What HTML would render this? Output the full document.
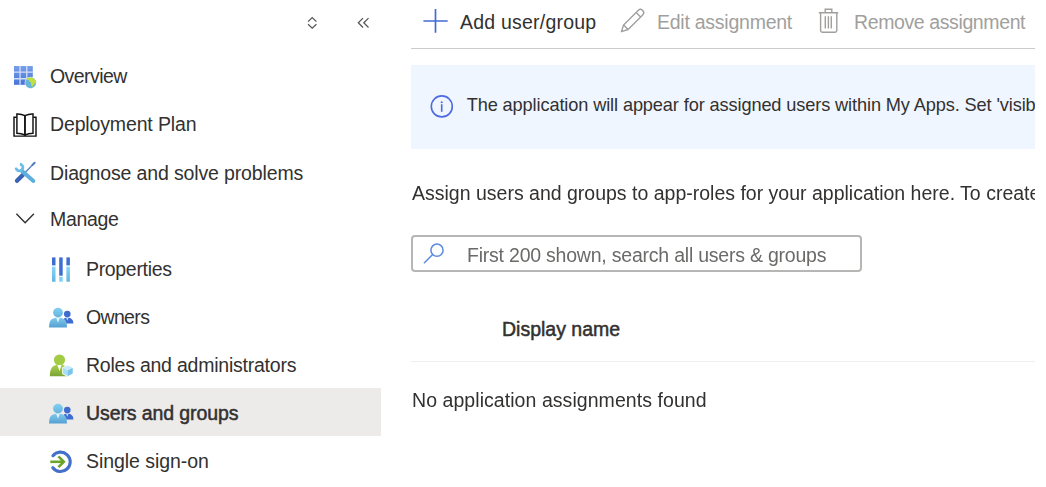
<!DOCTYPE html>
<html><head><meta charset="utf-8">
<style>
html,body{margin:0;padding:0;background:#fff;}
body{width:1046px;height:487px;overflow:hidden;position:relative;font-family:"Liberation Sans",sans-serif;color:#323130;}
.t{position:absolute;white-space:nowrap;line-height:24px;}
.ab{position:absolute;}
#ic{position:absolute;left:0;top:0;}
</style></head><body>
<div class="ab" style="left:0;top:388px;width:381px;height:48px;background:#edebe9;"></div>
<div class="ab" style="left:411px;top:48px;width:624px;height:1px;background:#cbcbcb"></div>
<div class="ab" style="left:411px;top:65px;width:624px;height:84px;background:#f0f6ff;"></div>
<div class="ab" style="left:411px;top:235px;width:447px;height:33px;border:2px solid #b8b6b4;border-radius:4px"></div>
<div class="ab" style="left:411px;top:361px;width:624px;height:1px;background:#f1f0ef"></div>
<div class="ab" style="left:411px;top:60px;width:624px;height:160px;overflow:hidden">
 <div class="t" id="bt" style="left:55.7px;top:32.59px;font-size:18.2px;letter-spacing:-0.12px">The application will appear for assigned users within My Apps. Set 'visible to users?' to no in properties to prevent this.</div>
 <div class="t" id="as" style="will-change:transform;left:0.7px;top:121.24px;font-size:19.5px;letter-spacing:0px">Assign users and groups to app-roles for your application here. To create new app-roles for this application, use the application registration.</div>
</div>
<div class="t" style="left:50px;top:64.24px;font-size:19.5px;letter-spacing:-0.55px;color:#323130">Overview</div>
<div class="t" style="left:50px;top:112.24px;font-size:19.5px;letter-spacing:-0.14px;color:#323130">Deployment Plan</div>
<div class="t" style="left:50px;top:161.24px;font-size:19.5px;letter-spacing:-0.14px;color:#323130">Diagnose and solve problems</div>
<div class="t" style="left:50px;top:206.94px;font-size:19.5px;letter-spacing:-0.3px;color:#323130">Manage</div>
<div class="t" style="left:86px;top:257.24px;font-size:19.5px;letter-spacing:-0.33px;color:#323130">Properties</div>
<div class="t" style="left:86px;top:304.84px;font-size:19.5px;letter-spacing:-0.66px;color:#323130">Owners</div>
<div class="t" style="left:86px;top:353.04px;font-size:19.5px;letter-spacing:-0.23px;color:#323130">Roles and administrators</div>
<div class="t" style="left:86px;top:400.94px;font-size:19.5px;letter-spacing:-0.1px;-webkit-text-stroke:0.5px currentColor;color:#323130">Users and groups</div>
<div class="t" style="left:86px;top:449.24px;font-size:19.5px;letter-spacing:-0.06px;color:#323130">Single sign-on</div>
<div class="t" style="left:460px;top:9.94px;font-size:19.5px;letter-spacing:0.22px;color:#323130">Add user/group</div>
<div class="t" style="left:657px;top:9.94px;font-size:19.5px;letter-spacing:-0.25px;color:#a19f9d">Edit assignment</div>
<div class="t" style="left:854px;top:9.94px;font-size:19.5px;letter-spacing:-0.39px;color:#a19f9d">Remove assignment</div>
<div class="t" style="will-change:transform;left:467px;top:243.04px;font-size:19.5px;letter-spacing:-0.22px;color:#6b6a69">First 200 shown, search all users &amp; groups</div>
<div class="t" style="left:502px;top:317.34px;font-size:19.5px;letter-spacing:0px;-webkit-text-stroke:0.5px currentColor;color:#323130">Display name</div>
<div class="t" style="will-change:transform;left:412px;top:388.04px;font-size:19.5px;letter-spacing:0.06px;color:#323130">No application assignments found</div>
<svg id="ic" width="1046" height="487" viewBox="0 0 1046 487">
 <defs>
  <linearGradient id="gGrid" gradientUnits="userSpaceOnUse" x1="0" y1="66" x2="0" y2="85"><stop offset="0" stop-color="#77a0ea"/><stop offset="1" stop-color="#4673d6"/></linearGradient>
  <linearGradient id="gLight" x1="0" y1="0" x2="0" y2="1"><stop offset="0" stop-color="#86d6f7"/><stop offset="1" stop-color="#62b4e0"/></linearGradient>
  <linearGradient id="gPerson" x1="0" y1="0" x2="0" y2="1"><stop offset="0" stop-color="#7fcaee"/><stop offset="1" stop-color="#56a0d2"/></linearGradient>
  <linearGradient id="gHead" x1="0" y1="0" x2="0" y2="1"><stop offset="0" stop-color="#82d0f2"/><stop offset="1" stop-color="#66b2de"/></linearGradient>
  <linearGradient id="gGreen" x1="0" y1="0" x2="0" y2="1"><stop offset="0" stop-color="#a9d24a"/><stop offset="1" stop-color="#7aa436"/></linearGradient>
 </defs>
 <!-- top chevrons -->
 <path d="M308.1 21.6 L312.2 17.6 L316.4 21.6 M308.1 24.3 L312.2 28.1 L316.4 24.3" fill="none" stroke="#555" stroke-width="1.25"/>
 <path d="M363 18.1 L358.3 22.8 L363 27.5 M368.5 18.1 L363.8 22.8 L368.5 27.5" fill="none" stroke="#555" stroke-width="1.25"/>
 <!-- overview grid -->
 <rect x="14" y="66" width="18.8" height="18.8" fill="url(#gGrid)"/>
 <path d="M20.05 66 V84.8 M26.75 66 V84.8 M14 72.05 H32.8 M14 78.75 H32.8" stroke="#d3def5" stroke-width="1.3"/>
 <circle cx="30.6" cy="82.8" r="6" fill="#e9f0fb"/>
 <circle cx="30.6" cy="82.8" r="5.4" fill="#66b4da"/>
 <path d="M26.4 78.6 Q28.8 77.3 31.5 77.5 Q34.2 78.2 35.6 80.6 L35.9 82.8 L34.6 83.8 L33.2 85.4 L32.2 87.2 L31.2 85.2 L30.8 82.6 L29.4 81.2 L28.8 79.9 L27.2 79.8 Z" fill="#bfe03e"/>
 <!-- book -->
 <g fill="none" stroke="#111" stroke-width="1.45" stroke-linejoin="miter">
  <path d="M16.6 117.3 H14 V136.1 H36 V117.3 H33.3"/>
  <path d="M16.9 114 Q21.3 113.8 24.95 115.6 V135 Q21.3 133.3 16.9 133.2 Z"/>
  <path d="M33 114 Q28.6 113.8 24.95 115.6 V135 Q28.6 133.3 33 133.2 Z"/>
 </g>
 <!-- wrench -->
 <line x1="17" y1="180.8" x2="22.8" y2="175" stroke="#3b64b6" stroke-width="4.4" stroke-linecap="round"/>
 <line x1="22.5" y1="175.3" x2="33.8" y2="163.6" stroke="#4a7cc4" stroke-width="1.35"/>
 <line x1="32.3" y1="165.1" x2="34.6" y2="162.8" stroke="#4a7cc4" stroke-width="2" stroke-linecap="round"/>
 <line x1="21.5" y1="170.5" x2="33.4" y2="181" stroke="#5eaede" stroke-width="3.9" stroke-linecap="round"/>
 <path d="M19.9 164.1 A3.45 3.45 0 1 1 16 167.6" fill="none" stroke="#6cbde8" stroke-width="2.7"/>
 <!-- manage chevron -->
 <path d="M16.4 213.7 L25.15 222.7 L33.9 213.7" fill="none" stroke="#323130" stroke-width="1.4"/>
 <!-- properties -->
 <g>
  <rect x="52" y="257.4" width="3.5" height="8" fill="#3f6ed2"/><rect x="52" y="266.7" width="3.5" height="15" fill="url(#gLight)"/>
  <rect x="59.2" y="257.4" width="3.5" height="18.3" fill="#3f6ed2"/><rect x="59.2" y="276.8" width="3.5" height="4.9" fill="#7fd0f5"/>
  <rect x="66.4" y="257.4" width="3.5" height="8" fill="#3f6ed2"/><rect x="66.4" y="266.7" width="3.5" height="15" fill="url(#gLight)"/>
 </g>
 <!-- owners / users -->
 <g id="ppl">
  <circle cx="67.3" cy="314" r="3.3" fill="#3e6bd0"/>
  <path d="M63 323.6 V320.6 Q63.6 317.6 67.3 317.6 Q70.8 317.6 72.6 320 Q73.4 321.5 73.4 323.6 Z" fill="#3f6cd0"/>
  <path d="M66.2 317.8 L67.3 320.8 L68.4 317.8 Z" fill="#cfe6fa"/>
  <circle cx="58" cy="312.6" r="4.9" fill="url(#gHead)"/>
  <path d="M49 327.4 Q49 321 52 319 Q54.5 317.5 58 317.5 Q61.5 317.5 64 319 Q67 321 67 327.4 Z" fill="url(#gPerson)"/>
  <path d="M56.2 317.7 L58 322.8 L59.8 317.7 Z" fill="#e4f5fd"/>
 </g>
 <use href="#ppl" y="96"/>
 <!-- roles -->
 <circle cx="59.5" cy="360" r="5.6" fill="#a3cc45"/>
 <path d="M49.9 376.3 Q49.7 368.5 53.5 366 Q56.3 364.6 59.5 364.6 Q62.8 364.6 65.5 366 Q69 368 69.2 376.3 Z" fill="url(#gGreen)"/>
 <path d="M57.4 365 L59.5 371 L61.6 365 Z" fill="#fff"/>
 <path d="M67.8 364.6 L73.4 367.6 V374 L67.8 377 L62.2 374 V367.6 Z" fill="#fff"/>
 <path d="M67.8 365.6 L72.6 368.1 V373.6 L67.8 376.1 L63 373.6 V368.1 Z" fill="#a6ddf8"/>
 <path d="M67.8 365.6 L72.6 368.1 L67.8 370.6 L63 368.1 Z" fill="#c8ecfc"/>
 <path d="M72.6 368.1 V373.6 L67.8 376.1 V370.6 Z" fill="#7cc3ea"/>
 <!-- sso -->
 <path d="M52.96 455.7 A9.7 9.7 0 1 1 52.8 467.7" fill="none" stroke="#4470cc" stroke-width="3.1" stroke-linecap="round"/>
 <path d="M50.3 461.8 H64" stroke="#6aa428" stroke-width="2.6"/>
 <path d="M58.4 456.4 L63.8 461.8 L58.4 467.2" fill="none" stroke="#6aa428" stroke-width="2.6"/>
 <!-- toolbar -->
 <path d="M423.4 21 H447.7 M435.5 9.1 V32.8" stroke="#426cd4" stroke-width="1.7"/>
 <g transform="translate(621.4 31.7) rotate(-45)" fill="none" stroke="#a19f9d" stroke-width="1.35" stroke-linejoin="round">
  <path d="M0 0 L6.3 -3.2 H26.9 A3.2 3.2 0 0 1 26.9 3.2 H6.3 Z M6.3 -3.2 V3.2 M24 -3.2 V3.2"/>
 </g>
 <g fill="none" stroke="#a19f9d" stroke-width="1.4">
  <path d="M818.8 12.8 H838.2 M825.2 12.8 V9.2 H831.8 V12.8"/>
  <path d="M820.6 12.8 V30.6 Q820.6 32.3 822.3 32.3 H835.1 Q836.8 32.3 836.8 30.6 V12.8"/>
  <path d="M825.3 16.2 V28.4 M828.4 16.2 V28.4 M831.3 16.2 V28.4"/>
 </g>
 <!-- info -->
 <circle cx="441.8" cy="106.4" r="10.5" fill="none" stroke="#4d6ae0" stroke-width="1.6"/>
 <circle cx="441.7" cy="102.2" r="1.05" fill="#4d6ae0"/>
 <path d="M441.7 104.2 V111.8" stroke="#4d6ae0" stroke-width="1.6"/>
 <!-- search -->
 <circle cx="437" cy="250.2" r="6.1" fill="none" stroke="#5e8ce2" stroke-width="1.55"/>
 <path d="M432.7 254.5 L424.4 262.8" stroke="#5e8ce2" stroke-width="1.55" stroke-linecap="round"/>
</svg>
</body></html>
